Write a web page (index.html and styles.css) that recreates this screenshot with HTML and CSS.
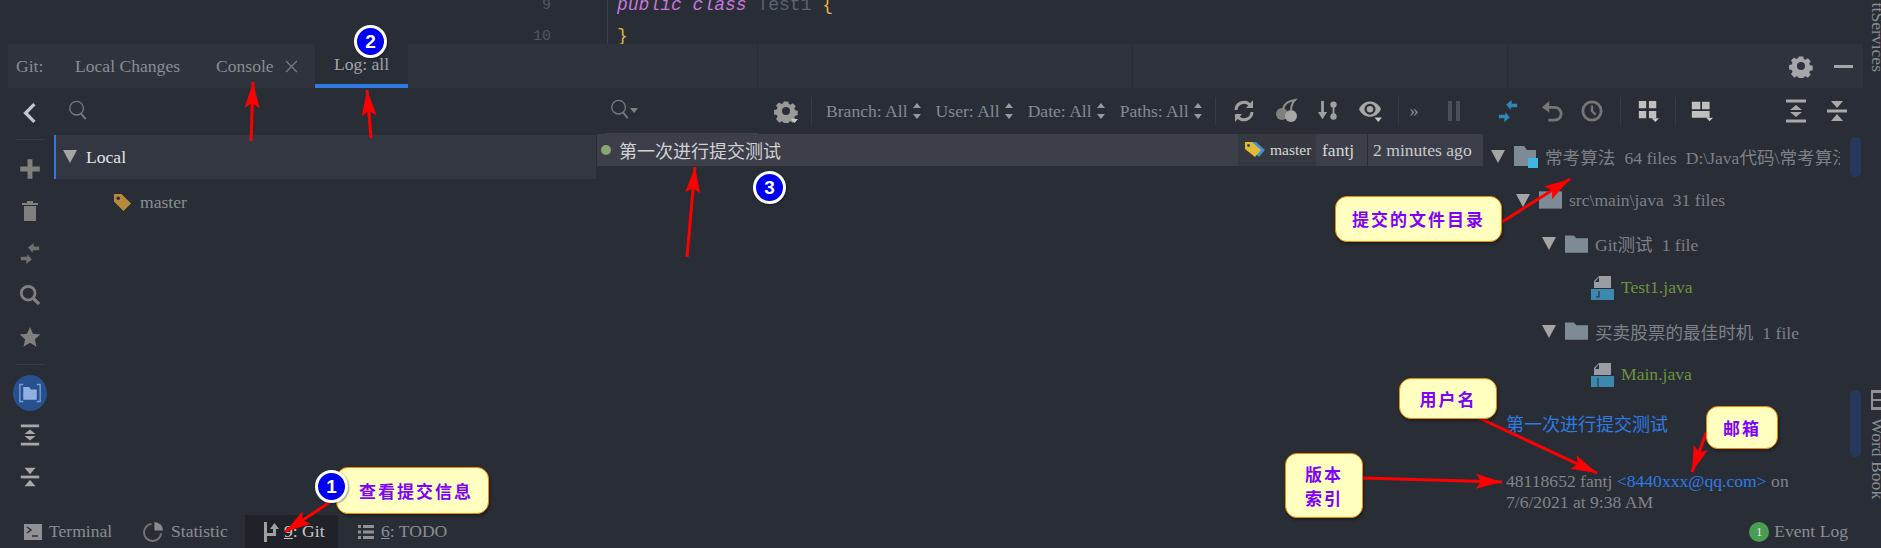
FILE: index.html
```html
<!DOCTYPE html>
<html lang="zh-CN">
<head>
    <meta charset="UTF-8">
    <title>Git Log</title>
    <link rel="stylesheet" href="styles.css">
</head>
<body>
<div class="editor">
    <div class="gutter"><div>9</div><div>10</div></div>
    <div class="code">
        <div><i class="kw">public class</i> <span class="cls">Test1</span> <span class="brace">{</span></div>
        <div><span class="brace">}</span></div>
    </div>
</div>

<div class="tabbar">
    <span class="tab-label">Git:</span>
    <span class="tab tab-changes">Local Changes</span>
    <span class="tab tab-console">Console
        <svg class="tab-close" viewBox="0 0 12 12"><path d="M1 1l10 10M11 1L1 11" stroke="#777b82" stroke-width="1.2"/></svg>
    </span>
    <span class="tab tab-log">Log: all</span>
    <span class="tab-rest">
        <span class="tab-cell c1"></span><span class="tab-cell c2"></span><span class="tab-cell c3"></span>
        <svg class="ico gear-top" viewBox="0 0 24 24"><path d="M9.500 1h5l.6 3 2 .9 2.600-1.700 3.300 3.300-1.700 2.600.9 2 3 .6v5l-3 .6-.9 2 1.700 2.600-3.300 3.300-2.600-1.700-2 .9-.6 3h-5l-.6-3-2-.9-2.600 1.700L.6 21l1.700-2.600-.9-2-3-.6v-5l3-.6.9-2L.6 5.600 3.900 2.300l2.600 1.700 2-.9z" fill="#a4a6aa" transform="translate(1.500 1.500) scale(.88)"/><circle cx="12" cy="12" r="4" fill="#2f333d"/></svg>
        <span class="minimize"></span>
    </span>
</div>

<div class="body">
    <div class="side">
        <div class="side-btn"><svg viewBox="0 0 16 20"><path d="M12 2L4 10l8 8" fill="none" stroke="#c4c6c9" stroke-width="3"/></svg></div>
        <div class="side-sep"></div>
        <div class="side-btn"><svg viewBox="0 0 18 18"><path d="M7 1h4v6h6v4h-6v6H7v-6H1V7h6z" fill="#808080"/></svg></div>
        <div class="side-btn"><svg viewBox="0 0 18 22"><path d="M6 1h6v2h5v2H1V3h5zM3 6h12v15H3z" fill="#808080"/></svg></div>
        <div class="side-btn"><svg viewBox="0 0 24 24"><path d="M2 15h7v-3l5 6-6 5v-4H2zM22 8h-7v3l-5-6 6-5v4h6z" fill="#707070" transform="translate(0 1)"/></svg></div>
        <div class="side-btn"><svg viewBox="0 0 24 24"><circle cx="10" cy="10" r="7.500" fill="none" stroke="#808080" stroke-width="3"/><path d="M15 15l7 7" stroke="#808080" stroke-width="3.500"/></svg></div>
        <div class="side-btn"><svg viewBox="0 0 24 24"><path d="M12 1l3.300 7.500 8 .7-6 5.300 1.800 8L12 18.300 4.900 22.500l1.800-8-6-5.300 8-.7z" fill="#808080"/></svg></div>
        <div class="side-sep low"></div>
        <div class="side-btn round"><svg viewBox="0 0 26 24"><path d="M5 2H1v20h4M21 2h4v20h-4" fill="none" stroke="#7f9fd0" stroke-width="1.600"/><path d="M5 5h7l2 3h7v12H5z" fill="#8fb0e0"/></svg></div>
        <div class="side-btn"><svg viewBox="0 0 22 24"><path d="M1 2h20M1 22h20" stroke="#a8a8a8" stroke-width="3"/><path d="M11 6l6 5H5zM11 18l6-5H5z" fill="#a8a8a8"/></svg></div>
        <div class="side-btn"><svg viewBox="0 0 22 24"><path d="M1 12h20" stroke="#a8a8a8" stroke-width="3"/><path d="M5 2h12l-6 7zM5 22h12l-6-7z" fill="#a8a8a8"/></svg></div>
    </div>

    <div class="panels">
        <div class="heads">
            <div class="branch-head">
                <svg class="search" viewBox="0 0 20 22"><circle cx="9" cy="9" r="7.500" fill="none" stroke="#767a80" stroke-width="1.500"/><path d="M14 15l5 6" stroke="#767a80" stroke-width="2"/></svg>
            </div>
            <div class="log-head">
                <div class="log-search">
                    <svg class="search" viewBox="0 0 20 22"><circle cx="9" cy="9" r="7.500" fill="none" stroke="#767a80" stroke-width="1.500"/><path d="M14 15l5 6" stroke="#767a80" stroke-width="2"/></svg>
                    <span class="caret-small"></span>
                </div>
                <svg class="ico gear" viewBox="0 0 24 24"><path d="M9.500 1h5l.6 3 2 .9 2.600-1.700 3.300 3.300-1.700 2.600.9 2 3 .6v5l-3 .6-.9 2 1.700 2.600-3.300 3.300-2.600-1.700-2 .9-.6 3h-5l-.6-3-2-.9-2.600 1.700L.6 21l1.700-2.600-.9-2-3-.6v-5l3-.6.9-2L.6 5.600 3.900 2.300l2.600 1.700 2-.9z" fill="#9a9a9a" transform="translate(1.500 1.500) scale(.88)"/><circle cx="12" cy="12" r="4" fill="#292d35"/><path d="M17 20h7l-3.500 4z" fill="#c8c8c8"/></svg>
                <span class="tool-sep s-a"></span>
                <span class="filter f-branch">Branch: All<span class="spin"></span></span>
                <span class="filter f-rest">User: All<span class="spin"></span></span>
                <span class="filter f-rest">Date: All<span class="spin"></span></span>
                <span class="filter f-rest">Paths: All<span class="spin"></span></span>
                <span class="tool-sep s-b"></span>
                <span class="tool t-first"><svg viewBox="0 0 22 24"><path d="M3 11a8 8 0 0 1 14-5M19 13a8 8 0 0 1-14 5" fill="none" stroke="#a0a0a0" stroke-width="3"/><path d="M20 1v8h-7zM2 23v-8h7z" fill="#a0a0a0"/></svg></span>
                <span class="tool"><svg viewBox="0 0 22 24"><circle cx="7" cy="15" r="6" fill="#808080"/><circle cx="16" cy="17" r="6" fill="#a6a6a6"/><path d="M8 10C9 5 13 2 20 1c-3 3-4 8-4 11" fill="none" stroke="#909090" stroke-width="2"/></svg></span>
                <span class="tool"><svg viewBox="0 0 24 24"><path d="M6 1v14" stroke="#a0a0a0" stroke-width="3"/><path d="M1 13h10l-5 8z" fill="#a0a0a0"/><circle cx="18" cy="5" r="3.500" fill="#a0a0a0"/><circle cx="18" cy="18" r="3.500" fill="#a0a0a0"/><path d="M18 5v13" stroke="#a0a0a0" stroke-width="2"/></svg></span>
                <span class="tool"><svg viewBox="0 0 24 24"><path d="M0 10C5-1 19-1 24 10 19 21 5 21 0 10z" fill="#a8a8a8"/><circle cx="12" cy="10" r="6" fill="#292d35"/><circle cx="12" cy="10" r="3.500" fill="#a8a8a8"/><path d="M17 19h8l-4 5z" fill="#c8c8c8"/></svg></span>
                <span class="tool-sep s-c"></span>
                <span class="more">»</span>
                <span class="pause"></span>
                <span class="tool t-merge"><svg viewBox="0 0 24 24"><path d="M2 16h7v-3l5 6-6 5v-4H2zM22 8h-7v3l-5-6 6-5v4h6z" fill="#2f86b8"/></svg></span>
                <span class="tool t-undo"><svg viewBox="0 0 24 24"><path d="M7 8h8a6.500 6.500 0 0 1 0 14H8" fill="none" stroke="#767676" stroke-width="3"/><path d="M9 1v13L1 8z" fill="#767676"/></svg></span>
                <span class="tool t-clock"><svg viewBox="0 0 24 24"><circle cx="12" cy="12" r="10" fill="none" stroke="#767676" stroke-width="3"/><path d="M12 6v6l4 4" fill="none" stroke="#767676" stroke-width="2.500"/></svg></span>
                <span class="tool-sep s-d"></span>
                <span class="tool t-group"><svg viewBox="0 0 24 26"><path d="M2 2h8v8H2zM13 2h8v8h-8zM2 13h8v8H2zM13 13h8v8h-8z" fill="#c0c0c0"/><path d="M16 21h8l-4 4z" fill="#c8c8c8"/></svg></span>
                <span class="tool-sep s-e"></span>
                <span class="tool t-layout"><svg viewBox="0 0 26 26"><path d="M1 2h10v9H1zM13 2h9v9h-9zM1 13h21v8H1z" fill="#c0c0c0"/><path d="M18 21h8l-4 4z" fill="#c8c8c8"/></svg></span>
                <span class="tool t-expand"><svg viewBox="0 0 22 24"><path d="M1 2h20M1 22h20" stroke="#a8a8a8" stroke-width="3"/><path d="M11 6l6 5H5zM11 18l6-5H5z" fill="#a8a8a8"/></svg></span>
                <span class="tool t-collapse"><svg viewBox="0 0 22 24"><path d="M1 12h20" stroke="#a8a8a8" stroke-width="3"/><path d="M5 2h12l-6 7zM5 22h12l-6-7z" fill="#a8a8a8"/></svg></span>
            </div>
        </div>

        <div class="rows">
            <div class="branches">
                <div class="branch-root"><span class="tri"></span>Local</div>
                <div class="branch-item">
                    <svg class="tag" viewBox="0 0 20 20"><path d="M1 1h8l10 10-8 8L1 9z" fill="#b68a3c"/><circle cx="5.500" cy="5.500" r="1.800" fill="#292d35"/></svg>
                    master
                </div>
            </div>

            <div class="commits">
                <div class="commit">
                    <span class="dot"></span>
                    <span class="msg">第一次进行提交测试</span>
                    <span class="cell c-ref">
                        <svg class="ref-tag" viewBox="0 0 22 18"><path d="M6 1h6l9 8-6 7-9-8z" fill="#3d8fd8"/><path d="M1 1h7l9 8-6 7-10-8z" fill="#e2bb36"/><circle cx="4.500" cy="4.500" r="1.400" fill="#3c3f4a"/></svg>
                        master
                    </span>
                    <span class="cell c-author">fantj</span>
                    <span class="cell c-time">2 minutes ago</span>
                </div>
            </div>

            <div class="changes">
                <div class="tree-row lv0">
                    <span class="tri"></span>
                    <svg class="folder" viewBox="0 0 24 22"><path d="M0 0h10l3 4h9v16H0z" fill="#7e8b96"/><path d="M14 12h10v10H14z" fill="#40b6e0"/></svg>
                    <span class="path">常考算法<em>64 files</em><em>D:\Java代码\常考算法</em></span>
                </div>
                <div class="tree-row lv1">
                    <span class="tri"></span>
                    <svg class="folder" viewBox="0 0 24 18"><path d="M0 0h24v18H0z" fill="#7e8b96"/></svg>
                    <span class="path">src\main\java<em>31 files</em></span>
                </div>
                <div class="tree-row lv2">
                    <span class="tri"></span>
                    <svg class="folder" viewBox="0 0 24 18"><path d="M0 0h9l3 3h12v15H0z" fill="#7e8b96"/></svg>
                    <span class="path">Git测试<em>1 file</em></span>
                </div>
                <div class="tree-row lv3">
                    <svg class="file" viewBox="0 0 23 24"><path d="M8 0h12v12H3V5z" fill="#9a9ea3"/><path d="M8 1v5H4z" fill="#292d35"/><path d="M0 13h23v11H0z" fill="#3d88ad"/><path d="M8 15v6H5" fill="none" stroke="#292d35" stroke-width="1.200"/></svg>
                    <span class="java">Test1.java</span>
                </div>
                <div class="tree-row lv2">
                    <span class="tri"></span>
                    <svg class="folder" viewBox="0 0 24 18"><path d="M0 0h9l3 3h12v15H0z" fill="#7e8b96"/></svg>
                    <span class="path">买卖股票的最佳时机<em>1 file</em></span>
                </div>
                <div class="tree-row lv3">
                    <svg class="file" viewBox="0 0 23 24"><path d="M8 0h12v12H3V5z" fill="#9a9ea3"/><path d="M8 1v5H4z" fill="#292d35"/><path d="M0 13h23v11H0z" fill="#3d88ad"/><path d="M7 15v9" stroke="#292d35" stroke-width="1"/></svg>
                    <span class="java">Main.java</span>
                </div>
                <div class="detail">
                    <div class="detail-title">第一次进行提交测试</div>
                    <div class="detail-meta">48118652 fantj <span class="mail">&lt;8440xxx@qq.com&gt;</span> on<br>7/6/2021 at 9:38 AM</div>
                </div>
                <div class="thumb t1"></div>
                <div class="thumb t2"></div>
            </div>
        </div>
    </div>
</div>

<div class="status">
    <span class="st st-term">
        <svg viewBox="0 0 18 16"><path d="M0 0h18v16H0z" fill="#8f9194"/><path d="M3 3l4 3-4 3" fill="none" stroke="#292d35" stroke-width="1.500"/><path d="M8 12h6" stroke="#292d35" stroke-width="1.500"/></svg>
        Terminal
    </span>
    <span class="st st-stat">
        <svg viewBox="0 0 22 22"><path d="M9 3a9 9 0 1 0 10 10" fill="none" stroke="#767676" stroke-width="2"/><path d="M12 1a9 9 0 0 1 9 9h-9z" fill="#8a8a8a"/></svg>
        Statistic
    </span>
    <span class="st st-git">
        <svg viewBox="0 0 18 20"><path d="M2 0h3v20H2zM5 11h6V6h3v8H5z" fill="#a0a0a0"/><path d="M8 7l4.500-6L17 7z" fill="#a0a0a0"/></svg>
        <span><u>9</u>: Git</span>
    </span>
    <span class="st st-todo">
        <svg viewBox="0 0 16 14"><path d="M0 0h3v3H0zM5 0h11v3H5zM0 5.500h3v3H0zM5 5.500h11v3H5zM0 11h3v3H0zM5 11h11v3H5z" fill="#8f9194"/></svg>
        <span><u>6</u>: TODO</span>
    </span>
    <span class="st st-event"><span class="badge">1</span>Event Log</span>
</div>

<div class="stripe">
    <span class="stripe-top">ttServices</span>
    <svg class="stripe-ico" viewBox="0 0 10 20"><path d="M0 0h10v20H0z" fill="#8f9194"/><path d="M2 3h8v6H2zM2 11h8v6H2z" fill="#292d35"/></svg>
    <span class="stripe-word">Word Book</span>
</div>

<svg class="arrows" viewBox="0 0 1881 548">
    <defs>
        <marker id="head" markerUnits="userSpaceOnUse" markerWidth="28" markerHeight="18" refX="26" refY="9" orient="auto">
            <path d="M0 1.500L26 9 0 16.500 5 9z" fill="#f00"/>
        </marker>
    </defs>
    <g stroke="#f00" stroke-width="3" fill="none">
        <line x1="251" y1="141" x2="253" y2="82" marker-end="url(#head)"/>
        <line x1="371" y1="138" x2="367" y2="90" marker-end="url(#head)"/>
        <line x1="687" y1="257" x2="695" y2="167" marker-end="url(#head)"/>
        <line x1="1502" y1="222" x2="1570" y2="179" marker-end="url(#head)"/>
        <line x1="1479" y1="418" x2="1597" y2="473" marker-end="url(#head)"/>
        <line x1="1706" y1="433" x2="1692" y2="472" marker-end="url(#head)"/>
        <line x1="1363" y1="478" x2="1502" y2="482" marker-end="url(#head)"/>
        <line x1="330" y1="502" x2="285" y2="532" marker-end="url(#head)"/>
    </g>
</svg>

<div class="note n-view">查看提交信息</div>
<div class="note n-dir">提交的文件目录</div>
<div class="note n-user">用户名</div>
<div class="note n-mail">邮箱</div>
<div class="note n-ver">版本<br>索引</div>
<span class="num num1">1</span>
<span class="num num2">2</span>
<span class="num num3">3</span>
</body>
</html>
```

FILE: styles.css
```css
* { box-sizing: border-box; }
html, body { margin: 0; padding: 0; }
body { position: relative; width: 1881px; height: 548px; overflow: hidden; background: #292d35; color: #8a8d93; font-family: "Liberation Serif", "Noto Sans CJK SC", serif; font-size: 17.6px; }
svg { display: block; }

/* editor strip */
.editor { display: flex; height: 44px; overflow: hidden; font-family: "Liberation Mono", monospace; }
.gutter { width: 608px; height: 44px; padding-right: 56px; border-right: 1px solid #3a3e47; text-align: right; color: #4f5666; font-size: 15px; line-height: 31px; }
.gutter div:first-child { margin-top: -10px; }
.code { padding-left: 9px; font-size: 18px; line-height: 31px; }
.code div:first-child { margin-top: -10px; }
.kw { color: #c678dd; }
.cls { color: #5c6370; }
.brace { color: #e5b33e; }

/* tab bar */
.tabbar { display: flex; align-items: center; height: 44px; margin: 0 18px 0 8px; background: #2f333d; }
.tab-label { padding-left: 8px; width: 67px; }
.tab { display: flex; align-items: center; height: 44px; }
.tab-changes { width: 141px; }
.tab-console { width: 99px; gap: 11px; }
.tab-close { width: 13px; height: 13px; }
.tab-log { width: 93px; justify-content: center; background: #292d35; color: #a2a4a9; border-bottom: 4px solid #2e7be6; }
.tab-rest { flex: 1; display: flex; align-items: center; height: 44px; }
.tab-cell { height: 44px; border-right: 1px solid #292d35; }
.c1 { width: 350px; }
.c2 { width: 375px; }
.c3 { width: 375px; }
.gear-top { width: 24px; height: 24px; margin-left: 281px; flex-shrink: 0; }
.minimize { width: 19px; height: 3px; margin-left: 21px; background: #a4a6aa; flex-shrink: 0; }

/* main area */
.body { display: flex; height: 427px; }
.side { width: 54px; padding: 4px 0 0 6px; flex-shrink: 0; display: flex; flex-direction: column; align-items: center; }
.side-btn { display: flex; align-items: center; justify-content: center; width: 34px; height: 42px; }
.side-btn svg { width: 22px; height: 22px; }
.side-sep { width: 29px; height: 1px; margin: 5px 0 8px; background: #363a43; }
.side-sep.low { margin: 6px 0 7px; }
.round { height: 36px; margin: 3px 0; background: #27508f; border-radius: 50%; }
.panels { flex: 1; display: flex; flex-direction: column; min-width: 0; }
.heads { display: flex; height: 46px; }
.branch-head { width: 543px; padding: 12px 0 0 14px; }
.search { width: 19px; height: 20px; }
.log-head { flex: 1; display: flex; align-items: center; }
.log-search { display: flex; align-items: center; align-self: flex-end; gap: 1px; width: 153px; height: 45px; margin-left: 8px; padding: 0 0 2px 5px; border-bottom: 1px solid #3d4149; }
.log-search .search { margin-top: -2px; }
.caret-small { width: 0; height: 0; border: 4px solid transparent; border-top: 5px solid #808080; border-bottom: 0; }
.ico.gear { width: 24px; height: 24px; margin-left: 16px; flex-shrink: 0; }
.tool-sep { width: 1px; height: 28px; background: #363a43; flex-shrink: 0; }
.s-a { margin-left: 13px; }
.filter { display: flex; align-items: center; gap: 5px; color: #848a94; white-space: nowrap; }
.f-branch { margin-left: 14px; }
.f-rest { margin-left: 15px; }
.spin { position: relative; width: 8px; height: 14px; }
.spin::before, .spin::after { content: ""; position: absolute; left: 0; border: 4px solid transparent; }
.spin::before { top: -1px; border-bottom: 5px solid #96999e; border-top: 0; }
.spin::after { bottom: -1px; border-top: 5px solid #96999e; border-bottom: 0; }
.s-b { margin-left: 13px; }
.tool { display: flex; align-items: center; justify-content: center; width: 42px; height: 24px; flex-shrink: 0; }
.tool svg { width: 22px; height: 24px; overflow: visible; }
.t-first { margin-left: 7px; }
.s-c { margin-left: 7px; }
.more { margin-left: 11px; width: 12px; font-size: 18px; color: #8a8d93; }
.pause { width: 12px; height: 20px; margin-left: 26px; border-left: 4px solid #4b5058; border-right: 4px solid #4b5058; flex-shrink: 0; }
.t-merge { margin-left: 27px; }
.t-undo { margin-left: 2px; }
.t-clock { margin-left: -2px; }
.s-d { margin-left: 7px; }
.t-group { margin-left: 6px; }
.s-e { margin-left: 6px; }
.t-layout { margin-left: 5px; }
.t-expand { margin-left: 52px; }
.t-collapse { margin-left: -1px; }

.rows { flex: 1; display: flex; min-height: 0; }
.branches { width: 542px; padding-top: 1px; }
.branch-root { display: flex; align-items: center; height: 44px; padding-left: 7px; background: #333741; border-left: 2px solid #2e7be6; color: #e6e6e6; }
.tri { width: 0; height: 0; flex-shrink: 0; border-left: 7px solid transparent; border-right: 7px solid transparent; border-top: 13px solid #a5a5a5; }
.branch-root .tri { margin-right: 9px; margin-top: -2px; }
.branch-item { display: flex; align-items: center; gap: 8px; height: 46px; padding-left: 59px; }
.tag { width: 19px; height: 19px; }
.commits { width: 886px; margin-left: 1px; }
.commit { display: flex; align-items: center; height: 32px; background: #3c3f4a; color: #d8d8d8; }
.dot { width: 10px; height: 10px; margin-left: 4px; border-radius: 50%; background: #8aa66f; }
.msg { width: 619px; margin-left: 8px; font-size: 18px; color: #d0d2d6; }
.cell { display: flex; align-items: center; height: 32px; }
.c-ref { gap: 4px; width: 78px; padding-left: 6px; background: #35383f; font-size: 15.5px; }
.c-author { width: 52px; padding-left: 6px; border-right: 1px solid #2a2d34; }
.c-time { flex: 1; padding-left: 5px; color: #c8cacc; }
.ref-tag { width: 22px; height: 18px; }

.changes { position: relative; flex: 1; padding-top: 1px; }
.tree-row { display: flex; align-items: center; gap: 7px; height: 43.6px; }
.lv0 { padding-left: 8px; }
.lv1 { padding-left: 33px; }
.lv2 { padding-left: 59px; }
.lv3 { padding-left: 108px; }
.tree-row .tri { margin-right: 2px; }
.folder { width: 23px; height: 18px; flex-shrink: 0; }
.lv0 .folder { height: 22px; width: 24px; }
.file { width: 23px; height: 24px; }
.path { color: #7d8086; white-space: nowrap; overflow: hidden; }
.lv0 .path { width: 295px; }
.path em { margin-left: 9px; font-style: normal; }
.java { color: #6f9240; }
.detail { padding: 17px 0 0 23px; }
.detail-title { font-size: 18px; line-height: 22px; color: #2e7be6; }
.detail-meta { margin-top: 35px; line-height: 21px; color: #81848a; }
.mail { color: #2e7be6; }
.thumb { position: absolute; left: 367px; width: 11px; background: #25395c; border-radius: 5px; }
.t1 { top: 3px; height: 40px; }
.t2 { top: 256px; height: 67px; }

/* status bar */
.status { display: flex; align-items: center; height: 33px; padding-left: 24px; }
.st { display: flex; align-items: center; height: 33px; white-space: nowrap; }
.st-term { gap: 7px; width: 119px; }
.st-term svg { width: 18px; height: 16px; }
.st-stat { gap: 7px; width: 102px; }
.st-stat svg { width: 21px; height: 21px; }
.st-git { gap: 4px; width: 93px; padding-left: 17px; background: #1f2329; color: #c8c8c8; }
.st-git svg { width: 18px; height: 20px; }
.st-todo { gap: 7px; margin-left: 20px; }
.st-todo svg { width: 16px; height: 14px; }
.st-event { gap: 5px; margin-left: auto; padding-right: 33px; }
.badge { width: 20px; height: 20px; border-radius: 50%; background: #499c54; color: #e8e8e8; font-size: 12px; line-height: 20px; text-align: center; }

/* right stripe */
.stripe { position: absolute; top: 0; right: 0; width: 18px; height: 548px; overflow: hidden; color: #8a8d93; }
.stripe-top { position: absolute; left: 25px; top: -28px; width: 100px; line-height: 20px; text-align: right; white-space: nowrap; transform-origin: 0 0; transform: rotate(90deg); }
.stripe-ico { position: absolute; left: 8px; top: 390px; width: 10px; height: 20px; }
.stripe-word { position: absolute; left: 25px; top: 418px; line-height: 20px; white-space: nowrap; transform-origin: 0 0; transform: rotate(90deg); }

/* annotations */
.arrows { position: absolute; top: 0; left: 0; width: 1881px; height: 548px; pointer-events: none; }
.note { position: absolute; display: flex; align-items: center; justify-content: center; text-align: center; background: #ffffc0; border: 1px solid #f28a00; border-radius: 12px; box-shadow: 1px 2px 3px rgba(0, 0, 0, .35); color: #7f00ff; font-family: "Noto Sans CJK SC", sans-serif; font-size: 17px; font-weight: 700; line-height: 24px; letter-spacing: 2px; }
.n-view { left: 336px; top: 467px; width: 153px; height: 47px; padding-left: 7px; }
.n-dir { left: 1335px; top: 196px; width: 167px; height: 46px; }
.n-user { left: 1399px; top: 378px; width: 98px; height: 41px; }
.n-mail { left: 1706px; top: 406px; width: 72px; height: 43px; }
.n-ver { left: 1285px; top: 453px; width: 78px; height: 65px; }
.num { position: absolute; width: 33px; height: 33px; border: 3px solid #fff; border-radius: 50%; background: #0000f0; color: #fff; font-family: "Liberation Sans", sans-serif; font-size: 19px; font-weight: 700; line-height: 27px; text-align: center; box-shadow: 1px 1px 2px rgba(0, 0, 0, .4); }
.num1 { left: 315px; top: 470px; }
.num2 { left: 354px; top: 25px; }
.num3 { left: 753px; top: 171px; }
```
